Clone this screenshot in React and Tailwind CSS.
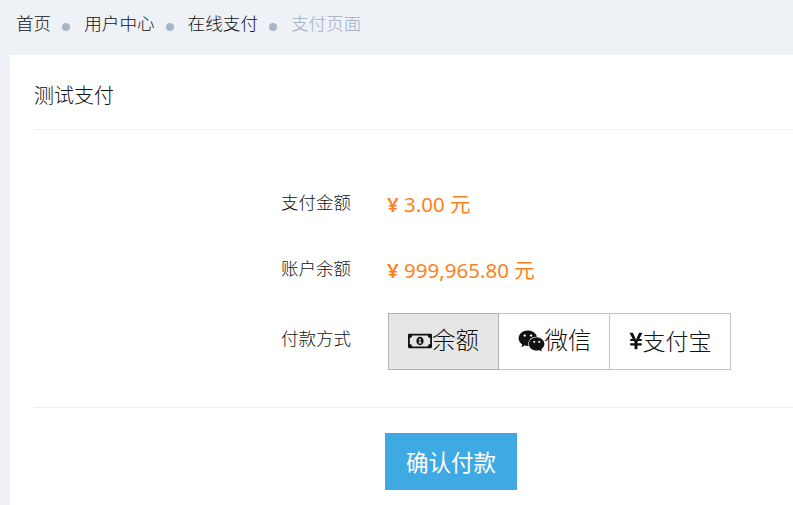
import React from "react";
import { FaRegMoneyBillAlt, FaWeixin, FaYenSign } from "react-icons/fa";

function Crumb({ children, last }) {
  return (
    <>
      <span className={last ? "text-[#a3afbf]" : "text-[#111111]"}>{children}</span>
      {!last && <span className="ml-[11px] mr-[14px] w-[8px] h-[8px] rounded-full bg-[#a8b5c6] mt-[6px]" />}
    </>
  );
}

function Row({ label, children, h, labelClass = "" }) {
  return (
    <div className={`flex ${h}`}>
      <div className={`w-[317px] text-right text-[17.5px] leading-[24px] text-[#111111] ${labelClass}`}>{label}</div>
      <div className="ml-[36px] flex-1">{children}</div>
    </div>
  );
}

export default function App() {
  return (
    <div className="h-[505px] w-[793px] overflow-hidden bg-[#eef1f6] font-['Noto_Sans','Noto_Sans_CJK_SC',sans-serif] font-light">
      <div className="h-[55px] flex items-center pl-[16px] text-[17.6px] pb-[8px]">
        <Crumb>首页</Crumb>
        <Crumb>用户中心</Crumb>
        <Crumb>在线支付</Crumb>
        <Crumb last>支付页面</Crumb>
      </div>
      <div className="ml-[10px] h-[450px] bg-white pl-[24px]">
        <div className="h-[75px] border-b border-[#eeeeee] flex items-center pt-[7px] text-[20px] text-[#111111]">
          测试支付
        </div>
        <div className="pt-[60px] h-[278px] border-b border-[#eeeeee]">
          <Row label="支付金额" h="h-[66px]">
            <div className="text-[20.5px] leading-[28px] text-[#ff7f1a] font-normal"><span className="font-semibold">¥</span> 3.00 元</div>
          </Row>
          <Row label="账户余额" h="h-[57px]">
            <div className="text-[20.5px] leading-[28px] text-[#ff7f1a] font-normal"><span className="font-semibold">¥</span> 999,965.80 元</div>
          </Row>
          <Row label="付款方式" h="h-[56px]" labelClass="pt-[13px]">
            <div className="flex ml-[1px] text-[23.5px] text-[#111111]">
              <div className="w-[111px] h-[57px] pb-[1px] flex items-center justify-center border border-[#b3b3b3] bg-[#e6e6e6]">
                <FaRegMoneyBillAlt className="w-[24px] h-[24px]" />余额
              </div>
              <div className="w-[111px] h-[57px] pb-[1px] pl-[1px] flex items-center justify-center border-y border-r border-[#c4c4c4]">
                <FaWeixin className="w-[27px] h-[24px]" />微信
              </div>
              <div className="w-[121px] h-[57px] pb-[1px] flex items-center justify-center border-y border-r border-[#c4c4c4] text-[23px]">
                <FaYenSign className="w-[14px] h-[22px]" />支付宝
              </div>
            </div>
          </Row>
        </div>
        <div className="pl-[351px] pt-[25px]">
          <button className="w-[132px] h-[57px] pt-[3px] bg-[#3fa9e3] text-white text-[22.5px] font-normal flex items-center justify-center">
            确认付款
          </button>
        </div>
      </div>
    </div>
  );
}
